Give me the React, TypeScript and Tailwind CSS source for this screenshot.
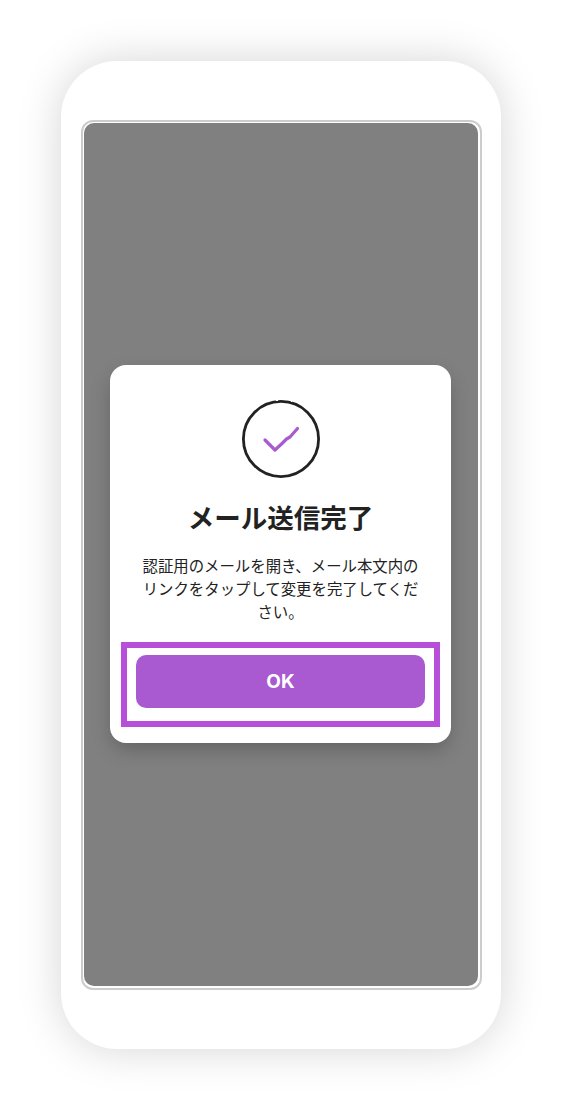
export default function App() {
  return (
    <div className="w-[561px] h-[1109px] bg-white pl-[61px] pt-[61px] font-['Inter','Noto_Sans_CJK_JP',sans-serif]">
      {/* phone frame */}
      <div className="w-[440px] h-[988px] rounded-[56px] bg-white shadow-[0_0_44px_rgba(0,0,0,0.17)] pl-[20px] pt-[59px]">
        <div className="w-[401px] h-[870px] rounded-[12px] border-2 border-[#cccccc] pl-px pt-px pr-[2px] pb-[2px]">
          <div className="w-full h-full rounded-[10px] bg-[#808080] flex items-center justify-center pr-px pb-px">
            <div className="w-[341px] h-[378px] rounded-[16px] bg-white shadow-[0_8px_20px_-2px_rgba(0,0,0,0.24)] flex flex-col items-center pt-[34px] px-[11px]">
              <svg width="80" height="80" viewBox="0 0 80 80" fill="none" className="shrink-0">
                {/* slight wobble, the original icon is hand drawn */}
                <filter id="rough" x="-5%" y="-5%" width="110%" height="110%">
                  <feTurbulence type="fractalNoise" baseFrequency="0.18" numOctaves="2" seed="4" />
                  <feDisplacementMap in="SourceGraphic" scale="1.6" />
                </filter>
                <g filter="url(#rough)">
                  <circle cx="40" cy="40" r="37.6" stroke="#222222" strokeWidth="2.8" />
                  <path
                    d="M24 41 L34 51 L41 44.5 L45.5 40 L49 38 L56.5 29.5"
                    stroke="#a95ad0"
                    strokeWidth="3.2"
                    strokeLinecap="round"
                    strokeLinejoin="round"
                  />
                </g>
              </svg>
              <h1 className="mt-[21px] text-[26.5px] leading-[36px] font-bold text-[#222222] whitespace-nowrap">
                メール送信完了
              </h1>
              <p className="mt-[19px] w-[280px] text-center text-[15.4px] leading-[23px] text-[#222222]">
                認証用のメールを開き、メール本文内のリンクをタップして変更を完了してください。
              </p>
              {/* highlighted action */}
              <div className="mt-[18px] w-[319px] h-[85px] shrink-0 border-[6px] border-[#b84fd8] px-[9px] pt-[7px]">
                <button
                  type="button"
                  className="w-full h-[53px] rounded-[10px] bg-[#a95ad0] text-white text-[19px] font-bold pt-px"
                >
                  OK
                </button>
              </div>
            </div>
          </div>
        </div>
      </div>
    </div>
  );
}
